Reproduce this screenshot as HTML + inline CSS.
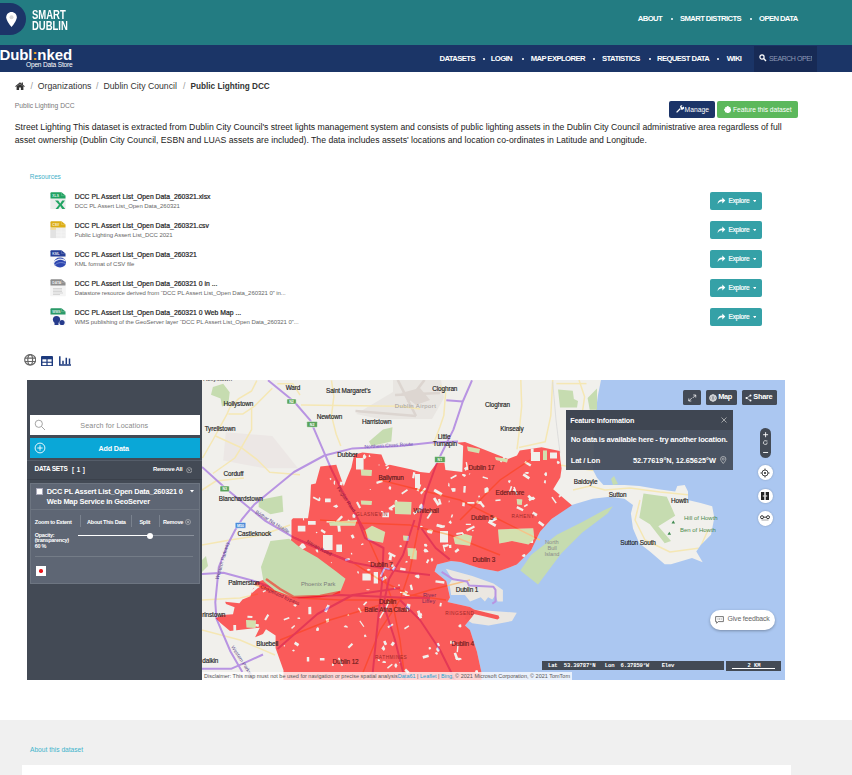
<!DOCTYPE html>
<html><head><meta charset="utf-8">
<style>
*{margin:0;padding:0;box-sizing:border-box}
html,body{width:852px;height:775px;overflow:hidden;background:#fff;font-family:"Liberation Sans",sans-serif;color:#333}
.a{position:absolute;white-space:nowrap;line-height:1}
#top{position:absolute;left:0;top:0;width:852px;height:45px;background:#237c82}
#nav{position:absolute;left:0;top:45px;width:852px;height:27px;background:#1b3567}
.tn{color:#fff;font-weight:bold;font-size:7.7px;letter-spacing:-0.6px}
.dot{position:absolute;width:2px;height:2px;background:#fff;border-radius:1px}
.bc{font-size:8.7px;color:#333}
.res-t{font-size:6.5px;font-weight:bold;color:#222}
.res-s{font-size:5.9px;color:#555}
.exp{position:absolute;left:710px;width:52px;height:18px;background:#35a1a7;border-radius:2px}
.exp span{position:absolute;left:18.5px;top:5.9px;font-size:6.5px;color:#fff;line-height:1;letter-spacing:-0.15px;-webkit-text-stroke:0.2px #fff}
#about{position:absolute;left:0;top:720px;width:852px;height:55px;background:#f0f0f0}
</style></head><body>
<div id="top"></div>
<div id="nav"></div>
<!-- Smart Dublin logo -->
<div class="a" style="left:0;top:3px;width:26px;height:31.5px;background:#1c3468;border-radius:0 16px 16px 0"></div>
<svg class="a" style="left:5px;top:11px" width="13" height="17" viewBox="0 0 13 17"><path d="M6.5 1C3.5 1 1.2 3.3 1.2 6.2c0 3.6 5.3 9.8 5.3 9.8s5.3-6.2 5.3-9.8C11.8 3.3 9.5 1 6.5 1z" fill="#fff"/><circle cx="6.5" cy="6.3" r="2" fill="#d9d9d9"/></svg>
<div class="a" style="left:31.5px;top:8.5px;color:#fff;font-size:13px;font-weight:bold;line-height:11px;transform:scaleX(0.73);transform-origin:0 0">SMART<br>DUBLIN</div>
<!-- Dublinked logo -->
<div class="a" style="left:-0.5px;top:47.2px;color:#fff;font-size:15px;font-weight:bold;letter-spacing:-0.1px">Dubl<span style="color:#f5a623">:</span>nked</div>
<div class="a" style="left:26px;top:62px;color:#fff;font-size:6.6px;letter-spacing:-0.2px">Open Data Store</div>

<div class="a tn" style="left:637.8px;top:15.2px">ABOUT</div>
<div class="dot" style="left:671px;top:18px"></div>
<div class="a tn" style="left:680px;top:15.2px">SMART DISTRICTS</div>
<div class="dot" style="left:750px;top:18px"></div>
<div class="a tn" style="left:759px;top:15.2px">OPEN DATA</div>

<div class="a tn" style="left:439.5px;top:54.8px">DATASETS</div>
<div class="dot" style="left:482.5px;top:57.5px"></div>
<div class="a tn" style="left:490.7px;top:54.8px">LOGIN</div>
<div class="dot" style="left:522px;top:57.5px"></div>
<div class="a tn" style="left:530.7px;top:54.8px">MAP EXPLORER</div>
<div class="dot" style="left:593px;top:57.5px"></div>
<div class="a tn" style="left:602px;top:54.8px">STATISTICS</div>
<div class="dot" style="left:648.5px;top:57.5px"></div>
<div class="a tn" style="left:657px;top:54.8px">REQUEST DATA</div>
<div class="dot" style="left:717px;top:57.5px"></div>
<div class="a tn" style="left:726.7px;top:54.8px">WIKI</div>
<div class="a" style="left:754px;top:45.5px;width:62.6px;height:26.5px;background:#172a55"></div>
<svg class="a" style="left:759px;top:54px" width="8" height="8" viewBox="0 0 8 8"><circle cx="3" cy="3" r="2.1" stroke="#fff" stroke-width="1.2" fill="none"/><path d="M4.6 4.6L7 7" stroke="#fff" stroke-width="1.4"/></svg>
<div class="a" style="left:769px;top:55.3px;width:43px;overflow:hidden;color:#8f9bb5;font-size:7px;letter-spacing:-0.45px">SEARCH OPEN DATA</div>

<!-- breadcrumb -->
<svg class="a" style="left:14.8px;top:82px" width="10" height="8" viewBox="0 0 10 8"><path d="M5 0.3L0.2 4.3l0.7 0.8L5 1.7l4.1 3.4 0.7-0.8L7.9 2.7V0.6H6.7v1.1z" fill="#333"/><path d="M1.6 4.6V8h2.5V5.6h1.8V8h2.5V4.6L5 1.9z" fill="#333"/></svg>
<div class="a bc" style="left:30.5px;top:81.7px;color:#999">/</div>
<div class="a bc" style="left:37.8px;top:81.7px">Organizations</div>
<div class="a bc" style="left:96px;top:81.7px;color:#999">/</div>
<div class="a bc" style="left:103.5px;top:81.7px">Dublin City Council</div>
<div class="a bc" style="left:183px;top:81.7px;color:#999">/</div>
<div class="a bc" style="left:190.6px;top:83px;font-weight:bold;font-size:8.2px">Public Lighting DCC</div>
<div class="a" style="left:14.8px;top:103px;font-size:6.7px;color:#777">Public Lighting DCC</div>

<div class="a" style="left:669.2px;top:101.2px;width:45.4px;height:17.2px;background:#1c3468;border-radius:2px"></div>
<svg class="a" style="left:676px;top:105px" width="8" height="8" viewBox="0 0 8 8"><path d="M0.6 7.4L4.2 3.8" stroke="#fff" stroke-width="1.3"/><path d="M4 1.6a2 2 0 0 1 2.6-1.2L5.4 1.6 6.4 2.6 7.6 1.4A2 2 0 0 1 5 4.4z" fill="#fff"/></svg>
<div class="a" style="left:684.6px;top:106.5px;color:#fff;font-size:6.75px">Manage</div>
<div class="a" style="left:717.2px;top:101.2px;width:80.5px;height:17.2px;background:#5cb85c;border-radius:2px"></div>
<svg class="a" style="left:723.5px;top:105.5px" width="7.5" height="7.5" viewBox="0 0 8 8"><g fill="#fff"><circle cx="4" cy="4" r="2.4"/><circle cx="4" cy="1.4" r="1.3"/><circle cx="4" cy="6.6" r="1.3"/><circle cx="1.4" cy="4" r="1.3"/><circle cx="6.6" cy="4" r="1.3"/><circle cx="2.2" cy="2.2" r="1.2"/><circle cx="5.8" cy="2.2" r="1.2"/><circle cx="2.2" cy="5.8" r="1.2"/><circle cx="5.8" cy="5.8" r="1.2"/></g></svg>
<div class="a" style="left:733px;top:106.5px;color:#fff;font-size:6.64px">Feature this dataset</div>

<div class="a" style="left:14.8px;top:123.3px;font-size:8.69px;color:#222">Street Lighting This dataset is extracted from Dublin City Council's street lights management system and consists of public lighting assets in the Dublin City Council administrative area regardless of full</div>
<div class="a" style="left:14.8px;top:136.3px;font-size:8.69px;color:#222">asset ownership (Dublin City Council, ESBN and LUAS assets are included). The data includes assets' locations and location co-ordinates in Latitude and Longitude.</div>

<div class="a" style="left:29.8px;top:174.2px;font-size:6.5px;color:#3fb0c9">Resources</div>
<!-- RESOURCES -->
<div class="a" style="left:49.8px;top:192.0px"><svg width="16" height="17.5" viewBox="0 0 16 17.5"><path d="M0.5 1.2Q0.5 0.3 1.4 0.3H11.5L15.5 3.6V17.2H0.5z" fill="#f3f3f3"/><rect x="0.5" y="7" width="15" height="10" fill="#ececec"/><path d="M5 8.5h3.2l2 3 2-3h2.8l-3.2 4.3 3.4 4.2h-3l-2-3-2 3H5.5l3.5-4.3z" fill="#22a463"/><path d="M0.5 1.2Q0.5 0.3 1.4 0.3H11.5L15.5 3.6V6.6H0.5z" fill="#21a262"/><path d="M11.5 0.3V3.6H15.5" fill="none" stroke="#fff" stroke-opacity="0.5" stroke-width="0.4"/><text x="2.3" y="4.8" font-family="Liberation Sans" font-weight="bold" font-size="3.4" fill="#fff" fill-opacity="0.85">XLS</text></svg></div>
<div class="a" style="left:74.7px;top:194.40px;font-size:6.8px;color:#222;letter-spacing:0.03px;-webkit-text-stroke:0.2px #222">DCC PL Assert List_Open Data_260321.xlsx</div>
<div class="a" style="left:74.7px;top:203.00px;font-size:6px;color:#666;letter-spacing:-0.05px">DCC PL Assert List_Open Data_260321</div>
<div class="exp" style="top:192.0px"><svg style="position:absolute;left:7px;top:5px" width="8.5" height="7.5" viewBox="0 0 9 8"><path d="M0.6 7.6C0.6 4.2 2.6 2.6 5.6 2.6V0.4L8.8 3.6 5.6 6.8V4.6C3.4 4.6 1.8 5.4 0.6 7.6z" fill="#fff"/></svg><span>Explore</span><svg style="position:absolute;left:42.6px;top:8.2px" width="3.6" height="2.2" viewBox="0 0 3.6 2.2"><path d="M0 0h3.6L1.8 2.2z" fill="#fff"/></svg></div>
<div class="a" style="left:49.8px;top:221.0px"><svg width="16" height="17.5" viewBox="0 0 16 17.5"><path d="M0.5 1.2Q0.5 0.3 1.4 0.3H11.5L15.5 3.6V17.2H0.5z" fill="#f3f3f3"/><rect x="0.5" y="7" width="15" height="10" fill="#eeeeee"/><rect x="0.5" y="7" width="5.5" height="10" fill="#e2e2e2"/><rect x="0.5" y="7" width="5.5" height="1.8" fill="#f3dca0"/><path d="M6 11h10M6 14h10M11 7v10" stroke="#f7f7f7" stroke-width="0.6"/><path d="M0.5 1.2Q0.5 0.3 1.4 0.3H11.5L15.5 3.6V6.6H0.5z" fill="#dcae16"/><path d="M11.5 0.3V3.6H15.5" fill="none" stroke="#fff" stroke-opacity="0.5" stroke-width="0.4"/><text x="2.3" y="4.8" font-family="Liberation Sans" font-weight="bold" font-size="3.4" fill="#fff" fill-opacity="0.85">CSV</text></svg></div>
<div class="a" style="left:74.7px;top:223.40px;font-size:6.8px;color:#222;letter-spacing:0.03px;-webkit-text-stroke:0.2px #222">DCC PL Assert List_Open Data_260321.csv</div>
<div class="a" style="left:74.7px;top:232.00px;font-size:6px;color:#666;letter-spacing:-0.05px">Public Lighting Assert List_DCC 2021</div>
<div class="exp" style="top:221.0px"><svg style="position:absolute;left:7px;top:5px" width="8.5" height="7.5" viewBox="0 0 9 8"><path d="M0.6 7.6C0.6 4.2 2.6 2.6 5.6 2.6V0.4L8.8 3.6 5.6 6.8V4.6C3.4 4.6 1.8 5.4 0.6 7.6z" fill="#fff"/></svg><span>Explore</span><svg style="position:absolute;left:42.6px;top:8.2px" width="3.6" height="2.2" viewBox="0 0 3.6 2.2"><path d="M0 0h3.6L1.8 2.2z" fill="#fff"/></svg></div>
<div class="a" style="left:49.8px;top:250.0px"><svg width="16" height="17.5" viewBox="0 0 16 17.5"><path d="M0.5 1.2Q0.5 0.3 1.4 0.3H11.5L15.5 3.6V17.2H0.5z" fill="#f3f3f3"/><rect x="0.5" y="7" width="15" height="10" fill="#fafafa"/><ellipse cx="10" cy="12.5" rx="6" ry="5" fill="#2e47b0"/><path d="M3 13.5c2.5-4 8-6 12.5-2.5" stroke="#e8ecf5" stroke-width="1.3" fill="none"/><path d="M4.5 15.5c2-2.5 6-4 11-2" stroke="#8fa0d8" stroke-width="0.7" fill="none"/><path d="M0.5 1.2Q0.5 0.3 1.4 0.3H11.5L15.5 3.6V6.6H0.5z" fill="#263f98"/><path d="M11.5 0.3V3.6H15.5" fill="none" stroke="#fff" stroke-opacity="0.5" stroke-width="0.4"/><text x="2.3" y="4.8" font-family="Liberation Sans" font-weight="bold" font-size="3.4" fill="#fff" fill-opacity="0.85">KML</text></svg></div>
<div class="a" style="left:74.7px;top:252.40px;font-size:6.8px;color:#222;letter-spacing:0.03px;-webkit-text-stroke:0.2px #222">DCC PL Assert List_Open Data_260321</div>
<div class="a" style="left:74.7px;top:261.00px;font-size:6px;color:#666;letter-spacing:-0.05px">KML format of CSV file</div>
<div class="exp" style="top:250.0px"><svg style="position:absolute;left:7px;top:5px" width="8.5" height="7.5" viewBox="0 0 9 8"><path d="M0.6 7.6C0.6 4.2 2.6 2.6 5.6 2.6V0.4L8.8 3.6 5.6 6.8V4.6C3.4 4.6 1.8 5.4 0.6 7.6z" fill="#fff"/></svg><span>Explore</span><svg style="position:absolute;left:42.6px;top:8.2px" width="3.6" height="2.2" viewBox="0 0 3.6 2.2"><path d="M0 0h3.6L1.8 2.2z" fill="#fff"/></svg></div>
<div class="a" style="left:49.8px;top:279.0px"><svg width="16" height="17.5" viewBox="0 0 16 17.5"><path d="M0.5 1.2Q0.5 0.3 1.4 0.3H11.5L15.5 3.6V17.2H0.5z" fill="#f3f3f3"/><rect x="0.5" y="7" width="15" height="10" fill="#f4f4f4"/><path d="M3 9.5h9M3 11h9M3 12.5h9M3 14h10M3 15.5h7" stroke="#c8c8c8" stroke-width="0.7"/><path d="M0.5 1.2Q0.5 0.3 1.4 0.3H11.5L15.5 3.6V6.6H0.5z" fill="#8e8e8e"/><path d="M11.5 0.3V3.6H15.5" fill="none" stroke="#fff" stroke-opacity="0.5" stroke-width="0.4"/><text x="2.3" y="4.8" font-family="Liberation Sans" font-weight="bold" font-size="3.4" fill="#fff" fill-opacity="0.85">DATA</text></svg></div>
<div class="a" style="left:74.7px;top:281.40px;font-size:6.8px;color:#222;letter-spacing:0.03px;-webkit-text-stroke:0.2px #222">DCC PL Assert List_Open Data_260321 0 in ...</div>
<div class="a" style="left:74.7px;top:290.00px;font-size:6px;color:#666;letter-spacing:-0.05px">Datastore resource derived from “DCC PL Assert List_Open Data_260321 0” in...</div>
<div class="exp" style="top:279.0px"><svg style="position:absolute;left:7px;top:5px" width="8.5" height="7.5" viewBox="0 0 9 8"><path d="M0.6 7.6C0.6 4.2 2.6 2.6 5.6 2.6V0.4L8.8 3.6 5.6 6.8V4.6C3.4 4.6 1.8 5.4 0.6 7.6z" fill="#fff"/></svg><span>Explore</span><svg style="position:absolute;left:42.6px;top:8.2px" width="3.6" height="2.2" viewBox="0 0 3.6 2.2"><path d="M0 0h3.6L1.8 2.2z" fill="#fff"/></svg></div>
<div class="a" style="left:49.8px;top:308.0px"><svg width="16" height="17.5" viewBox="0 0 16 17.5"><path d="M0.5 1.2Q0.5 0.3 1.4 0.3H11.5L15.5 3.6V17.2H0.5z" fill="#f3f3f3"/><rect x="0.5" y="7" width="15" height="10" fill="#fafafa"/><circle cx="6.5" cy="11.5" r="3.6" fill="#263b8c"/><rect x="4.5" y="14" width="4" height="3" fill="#263b8c"/><circle cx="12" cy="14.5" r="2.6" fill="#263b8c"/><path d="M0.5 1.2Q0.5 0.3 1.4 0.3H11.5L15.5 3.6V6.6H0.5z" fill="#2a9a68"/><path d="M11.5 0.3V3.6H15.5" fill="none" stroke="#fff" stroke-opacity="0.5" stroke-width="0.4"/><text x="2.3" y="4.8" font-family="Liberation Sans" font-weight="bold" font-size="3.4" fill="#fff" fill-opacity="0.85">WMS</text></svg></div>
<div class="a" style="left:74.7px;top:310.40px;font-size:6.8px;color:#222;letter-spacing:0.03px;-webkit-text-stroke:0.2px #222">DCC PL Assert List_Open Data_260321 0 Web Map ...</div>
<div class="a" style="left:74.7px;top:319.00px;font-size:6px;color:#666;letter-spacing:-0.05px">WMS publishing of the GeoServer layer “DCC PL Assert List_Open Data_260321 0”...</div>
<div class="exp" style="top:308.0px"><svg style="position:absolute;left:7px;top:5px" width="8.5" height="7.5" viewBox="0 0 9 8"><path d="M0.6 7.6C0.6 4.2 2.6 2.6 5.6 2.6V0.4L8.8 3.6 5.6 6.8V4.6C3.4 4.6 1.8 5.4 0.6 7.6z" fill="#fff"/></svg><span>Explore</span><svg style="position:absolute;left:42.6px;top:8.2px" width="3.6" height="2.2" viewBox="0 0 3.6 2.2"><path d="M0 0h3.6L1.8 2.2z" fill="#fff"/></svg></div>

<!-- view icons -->
<svg class="a" style="left:23.8px;top:354.2px" width="12.4" height="11.6" viewBox="0 0 12.4 11.6"><g fill="none" stroke="#666" stroke-width="1.2"><ellipse cx="6.2" cy="5.8" rx="5.5" ry="5.2"/><ellipse cx="6.2" cy="5.8" rx="2.4" ry="5.2"/><path d="M0.8 4.1h10.8M0.8 7.5h10.8"/></g></svg>
<svg class="a" style="left:41px;top:355.8px" width="12" height="10.4" viewBox="0 0 12 10.4"><rect x="0" y="0" width="12" height="10.4" rx="1" fill="#1d3a7d"/><rect x="1.4" y="3.3" width="4" height="2.4" fill="#fff"/><rect x="6.6" y="3.3" width="4" height="2.4" fill="#fff"/><rect x="1.4" y="6.8" width="4" height="2.3" fill="#fff"/><rect x="6.6" y="6.8" width="4" height="2.3" fill="#fff"/></svg>
<svg class="a" style="left:59px;top:356px" width="12.3" height="9.8" viewBox="0 0 12.3 9.8"><path d="M0.8 0.2V9H12.3" fill="none" stroke="#1d3a7d" stroke-width="1.5"/><path d="M4 4.8v3.4M7.3 1.8v6.4M10.5 2.6v5.6" stroke="#1d3a7d" stroke-width="1.5"/></svg>

<!-- MAP -->
<svg class="a" style="left:202px;top:380px" width="583" height="300" viewBox="202 380 583 300">
<rect x="202" y="380" width="583" height="300" fill="#f1f0ec"/>
<path d="M225.8 432.2L272.3 436L298 468.3L264.5 468.3L223.2 460.6z" fill="#ece7e5"/>
<path d="M393 380H441L444 398L432 419H380L356 414L393 392z" fill="#e9e6e2"/>
<g stroke="#dcd5d0" stroke-width="2.6" fill="none"><path d="M355.5 411L416 416"/><path d="M397.7 380L416 416"/><path d="M424.5 380L407.6 402"/><path d="M395 395L440 393"/></g>
<path d="M401 393L420 388L430 400L416 405z" fill="#ddd6d1"/>
<polyline points="520.8,380.0 521.7,406.0 518.9,434.3 517.0,449.4" fill="none" stroke="#f5e7b4" stroke-width="1.5" stroke-linejoin="round"/>
<polyline points="552.7,380.0 550.8,415.6 545.2,441.8 528.3,445.6 518.9,447.5" fill="none" stroke="#f5e7b4" stroke-width="1.5" stroke-linejoin="round"/>
<polyline points="579.0,380.0 584.6,396.8 582.7,410.0" fill="none" stroke="#f5e7b4" stroke-width="1.5" stroke-linejoin="round"/>
<polyline points="556.4,383.6 586.5,383.6" fill="none" stroke="#f5e7b4" stroke-width="1.5" stroke-linejoin="round"/>
<polyline points="440.0,385.5 445.6,393.0 443.8,415.6 440.0,426.8 433.0,445.0" fill="none" stroke="#f5e7b4" stroke-width="1.5" stroke-linejoin="round"/>
<polyline points="256.8,380.6 251.6,391.0 238.7,398.6 229.7,407.7 227.0,414.1 212.9,440.0 202.6,458.0" fill="none" stroke="#f5e7b4" stroke-width="1.5" stroke-linejoin="round"/>
<polyline points="272.3,388.3 254.2,406.4 242.6,414.1 228.4,414.1" fill="none" stroke="#f5e7b4" stroke-width="1.5" stroke-linejoin="round"/>
<polyline points="251.6,409.0 251.6,429.6 241.3,447.7 234.8,458.0 212.9,473.5" fill="none" stroke="#f5e7b4" stroke-width="1.5" stroke-linejoin="round"/>
<polyline points="215.5,436.0 241.3,447.7 256.8,459.3 269.7,472.2 300.0,474.8" fill="none" stroke="#f5e7b4" stroke-width="1.5" stroke-linejoin="round"/>
<polyline points="277.4,383.8 292.9,383.8 300.0,395.0" fill="none" stroke="#f5e7b4" stroke-width="1.5" stroke-linejoin="round"/>
<polyline points="331.5,380.3 333.8,396.8 331.5,415.6 336.2,434.3 340.8,446.0" fill="none" stroke="#f5e7b4" stroke-width="1.5" stroke-linejoin="round"/>
<polyline points="301.0,405.0 340.0,405.5 399.5,406.2 420.0,409.0" fill="none" stroke="#f5e7b4" stroke-width="1.5" stroke-linejoin="round"/>
<polyline points="202.0,490.0 216.0,481.0 244.0,478.0" fill="none" stroke="#f5e7b4" stroke-width="1.5" stroke-linejoin="round"/>
<polyline points="573.0,490.0 590.0,486.0 605.0,490.0 630.0,488.0 660.0,492.0 690.0,495.0" fill="none" stroke="#f5e7b4" stroke-width="1.5" stroke-linejoin="round"/>
<polyline points="640.0,500.0 635.0,520.0 645.0,540.0 670.0,552.0 700.0,548.0 708.0,530.0" fill="none" stroke="#f5e7b4" stroke-width="1.5" stroke-linejoin="round"/>
<polyline points="202.0,545.0 230.0,540.0 262.0,535.0 290.0,525.0" fill="none" stroke="#f5e7b4" stroke-width="1.5" stroke-linejoin="round"/>
<polyline points="202.0,630.0 240.0,640.0 275.0,655.0" fill="none" stroke="#f5e7b4" stroke-width="1.5" stroke-linejoin="round"/>
<polyline points="560.0,465.0 590.0,470.0 620.0,474.0" fill="none" stroke="#f5e7b4" stroke-width="1.5" stroke-linejoin="round"/>
<polyline points="202.0,600.0 240.0,598.0 258.0,594.0" fill="none" stroke="#f5e7b4" stroke-width="1.5" stroke-linejoin="round"/>
<polygon points="601.0,380.0 598.0,395.0 596.0,410.0 594.0,440.0 593.0,470.0 597.0,477.7 603.4,485.0 624.5,485.0 639.3,486.0 658.3,489.3 675.2,491.4 677.3,486.0 684.7,485.0 688.0,491.4 688.0,499.9 700.6,503.0 712.2,506.2 714.3,517.8 711.0,534.7 700.6,545.3 696.3,551.6 702.7,562.2 692.0,558.0 671.0,564.3 664.7,564.3 649.9,551.6 639.3,543.2 633.0,528.4 630.9,513.6 633.0,505.1 624.5,498.8 609.7,496.7 592.8,498.8 571.7,505.1 551.5,519.0 540.0,531.7 531.0,550.5 516.8,564.6 498.0,571.6 479.0,568.0 460.4,562.0 451.0,561.0 437.0,564.6 434.6,571.6 446.3,581.0 450.0,597.5 447.5,602.0 470.0,607.0 474.0,609.5 486.0,612.5 498.5,615.5 499.5,618.0 497.5,619.5 485.0,616.5 474.0,614.0 472.0,617.0 465.0,625.6 470.0,630.0 476.9,651.5 481.5,672.6 481.5,680.0 785.0,680.0 785.0,380.0" fill="#abc7f1"/>
<polygon points="445.8,568.7 472.3,576.0 493.4,583.5 502.9,589.9 502.9,601.5 497.6,601.5 495.5,595.1 492.3,599.4 488.1,597.3 484.9,601.5 480.7,597.3 470.1,601.5 464.9,595.1 451.1,595.1 449.5,583.5 452.2,579.3" fill="#ebe7e1"/>
<polygon points="467.5,609.2 516.8,612.7 512.0,621.0 488.6,625.6 472.2,623.3 465.0,618.6" fill="#ebe7e1"/>
<polygon points="212.9,387.0 223.2,383.8 229.7,392.2 228.4,403.8 222.0,406.4 220.6,398.6 211.0,394.8" fill="#c6dcb0"/>
<polygon points="258.7,500.0 282.2,495.4 283.3,511.8 270.4,514.2 258.7,507.0" fill="#c6dcb0"/>
<polygon points="369.0,441.4 383.0,429.6 392.5,427.3 391.3,441.4 371.4,446.0" fill="#c6dcb0"/>
<polygon points="558.0,389.6 572.8,390.7 573.9,399.0 578.0,401.0 577.0,407.6 560.0,407.6" fill="#c6dcb0"/>
<polygon points="587.6,398.0 597.0,388.6 597.0,409.7 589.7,409.7" fill="#c6dcb0"/>
<polygon points="612.9,506.2 607.6,513.6 582.3,532.6 561.0,553.7 538.0,584.6 520.3,570.5 531.0,555.0 556.9,534.7 582.3,522.0 603.4,510.4" fill="#c6dcb0"/>
<polygon points="643.5,493.5 666.8,496.7 675.2,515.7 658.3,526.3 671.0,541.0 664.7,543.2 649.9,524.2 639.3,517.8" fill="#c6dcb0"/>
<polygon points="611.0,479.0 614.0,476.0 618.0,484.0 613.0,485.0" fill="#c6dcb0"/>
<polygon points="202.0,560.0 206.0,556.0 208.0,566.0 202.0,572.0" fill="#c6dcb0"/>
<polygon points="498.0,529.4 533.2,528.2 534.4,538.8 528.5,544.6 512.0,541.0 499.2,543.5" fill="#d3e0ae"/>
<polygon points="543.0,450.5 547.0,450.5 547.0,460.0 543.0,460.0" fill="#d3e0ae"/>
<polygon points="360.8,469.4 372.0,469.9 371.5,476.0 361.3,475.5" fill="#d3e0ae"/>
<polygon points="360.8,500.4 372.0,500.9 371.5,505.0 361.3,504.5" fill="#d3e0ae"/>
<polygon points="394.6,501.4 411.5,501.9 411.0,514.5 395.1,514.0" fill="#d3e0ae"/>
<polygon points="365.4,530.0 372.0,525.8 385.2,532.0 383.0,542.7 368.0,540.0" fill="#d3e0ae"/>
<polygon points="328.8,522.0 357.0,520.0 355.0,525.8 330.0,525.8" fill="#d3e0ae"/>
<polygon points="409.6,550.0 417.0,550.5 416.5,559.6 410.1,559.1" fill="#d3e0ae"/>
<polygon points="467.0,446.6 480.0,449.0 479.0,453.2 468.0,451.0" fill="#d3e0ae"/>
<polygon points="495.0,457.0 508.0,459.0 507.0,462.6 496.0,460.0" fill="#d3e0ae"/>
<polygon points="516.7,499.0 522.3,499.5 521.8,505.0 517.2,504.5" fill="#d3e0ae"/>
<polygon points="453.4,537.0 465.0,534.0 472.2,536.0 470.0,545.8 455.0,544.0" fill="#d3e0ae"/>
<polygon points="403.0,535.5 409.0,536.0 408.5,541.0 403.5,540.5" fill="#d3e0ae"/>
<polygon points="407.5,548.0 416.0,548.5 415.5,556.6 408.0,556.1" fill="#d3e0ae"/>
<polygon points="246.0,620.0 256.0,620.5 255.5,628.0 246.5,627.5" fill="#d3e0ae"/>
<polyline points="331.5,469.5 340.8,488.3 364.3,530.0 380.0,565.0 392.0,600.0 400.0,640.0 405.0,680.0" fill="none" stroke="#f5c48a" stroke-width="1.5"/>
<polyline points="425.2,495.4 418.0,530.0 410.0,570.0 400.0,600.0 380.0,630.0 360.0,680.0" fill="none" stroke="#f5c48a" stroke-width="1.5"/>
<polyline points="294.0,537.6 322.0,550.5 352.6,562.3 380.0,580.0 410.0,595.0 446.0,600.0" fill="none" stroke="#f5c48a" stroke-width="1.5"/>
<polyline points="255.0,585.0 300.0,598.0 340.0,600.0 380.0,600.0 420.0,598.0" fill="none" stroke="#f5c48a" stroke-width="1.5"/>
<polyline points="280.0,640.0 330.0,620.0 380.0,605.0 430.0,590.0 470.0,580.0" fill="none" stroke="#f5c48a" stroke-width="1.5"/>
<polyline points="320.0,520.0 360.0,523.0 410.0,525.0 450.0,535.0 500.0,555.0" fill="none" stroke="#f5c48a" stroke-width="1.5"/>
<polyline points="380.0,480.0 420.0,490.0 460.0,500.0 500.0,520.0 540.0,540.0" fill="none" stroke="#f5c48a" stroke-width="1.5"/>
<polyline points="460.0,520.0 480.0,500.0 500.0,480.0 530.0,460.0" fill="none" stroke="#f5c48a" stroke-width="1.5"/>
<polyline points="552.7,381.8 556,420 560,453" fill="none" stroke="#d8d8d8" stroke-width="0.8"/>
<polyline points="294.0,537.6 350.0,562.0 400.0,571.6 430.0,575.0" fill="none" stroke="#b894e2" stroke-width="2" stroke-linejoin="round"/>
<polyline points="254.0,581.0 298.6,597.5 340.8,595.0 400.0,597.5 430.0,598.0" fill="none" stroke="#b894e2" stroke-width="2" stroke-linejoin="round"/>
<polyline points="277.5,649.0 317.4,614.0 352.6,595.0 400.0,588.0" fill="none" stroke="#b894e2" stroke-width="2" stroke-linejoin="round"/>
<polyline points="358.0,520.0 365.0,538.0 383.5,548.0 382.0,583.0 378.0,620.0 372.0,680.0" fill="none" stroke="#b894e2" stroke-width="2" stroke-linejoin="round"/>
<polyline points="414.5,520.0 403.0,555.0 389.0,579.0 383.5,604.5 395.0,640.0 405.0,680.0" fill="none" stroke="#b894e2" stroke-width="2" stroke-linejoin="round"/>
<polyline points="421.5,528.5 435.6,548.0 449.7,559.4" fill="none" stroke="#b894e2" stroke-width="2" stroke-linejoin="round"/>
<polyline points="400.0,600.0 420.0,620.0 440.0,650.0 455.0,680.0" fill="none" stroke="#b894e2" stroke-width="2" stroke-linejoin="round"/>
<polyline points="268.0,380.3 294.0,401.5 310.3,420.3 324.4,453.1 331.5,469.5 340.8,488.3 364.3,530.0" fill="none" stroke="#b894e2" stroke-width="2" stroke-linejoin="round"/>
<polyline points="324.4,455.5 294.0,472.0 254.0,504.8 242.3,518.8 235.2,530.0 228.2,543.5 218.8,567.0 215.3,602.2 216.4,618.6 230.5,651.5 242.3,672.0" fill="none" stroke="#b894e2" stroke-width="2" stroke-linejoin="round"/>
<polyline points="324.4,455.5 352.6,448.4 400.0,446.0 432.3,442.6 458.0,441.4" fill="none" stroke="#b894e2" stroke-width="2" stroke-linejoin="round"/>
<polyline points="472.0,380.3 462.8,401.5 453.4,429.6 437.0,462.5 425.2,495.4 418.0,530.0" fill="none" stroke="#b894e2" stroke-width="2" stroke-linejoin="round"/>
<polyline points="446.3,400.3 462.8,401.5" fill="none" stroke="#b894e2" stroke-width="2" stroke-linejoin="round"/>
<polyline points="202.0,467.0 225.5,488.3 247.0,506.0 265.7,521.2 294.0,537.6 322.0,550.5 352.6,562.3" fill="none" stroke="#b894e2" stroke-width="2" stroke-linejoin="round"/>
<polyline points="202.0,574.0 223.5,572.8 254.0,581.0" fill="none" stroke="#b894e2" stroke-width="2" stroke-linejoin="round"/>
<polyline points="202.0,668.7 231.5,668.7 245.7,662.4 263.0,654.5" fill="none" stroke="#b894e2" stroke-width="2" stroke-linejoin="round"/>
<polyline points="441.6,571.9 453.2,579.3 467.0,581.4 469.1,585.6 493.4,586.7 495.5,589.9 495.5,601.5 492.3,603.6" fill="none" stroke="#b894e2" stroke-width="2" stroke-linejoin="round"/>
<defs><mask id="hm" maskUnits="userSpaceOnUse" x="202" y="380" width="583" height="300"><rect x="202" y="380" width="583" height="300" fill="#fff"/><path d="M331.3 479.6 L330.6 480.3 L329.9 479.6 L329.6 478.3 L330.8 477.9 L331.4 478.4Z M415.4 472.4 L414.2 478.5 L412.1 478.1 L413.2 472.0Z M421.3 484.7 L418.6 491.4 L416.6 490.6 L419.2 483.9Z M393.7 564.6 L393.6 566.1 L392.2 567.0 L390.7 566.5 L390.7 565.3 L392.0 564.4Z M557.7 460.8 L559.9 462.0 L559.4 463.4 L557.7 464.2 L556.6 462.1Z M316.2 533.3 L315.7 532.2 L316.9 531.7 L317.5 532.2 L317.1 533.1Z M369.8 569.2 L370.8 570.1 L369.0 570.8 L367.7 570.7 L366.6 569.6 L368.8 568.8Z M400.0 584.7 L399.8 585.7 L398.7 586.1 L398.1 585.5 L398.5 584.2Z M340.1 523.5 L340.9 531.5 L338.0 531.8 L337.1 523.8Z M390.3 463.9 L386.0 466.5 L385.1 465.1 L389.5 462.5Z M465.0 502.4 L464.6 506.4 L462.1 506.1 L462.5 502.2Z M497.3 519.4 L490.3 522.9 L488.9 520.3 L496.0 516.7Z M480.1 496.5 L479.2 497.6 L478.2 497.3 L478.4 496.0 L478.8 495.6 L479.5 495.6Z M437.1 651.5 L436.1 649.0 L437.3 647.1 L438.8 647.9 L440.0 650.3 L438.9 651.8Z M427.9 550.5 L428.6 552.1 L424.7 552.4 L423.5 550.4 L424.7 548.5 L426.4 549.0Z M318.8 500.7 L318.6 498.2 L319.5 497.0 L320.5 498.6 L320.2 500.4 L319.6 501.3Z M332.0 562.7 L331.7 563.3 L331.0 563.1 L330.8 562.3 L331.2 562.2 L332.0 562.3Z M397.0 500.3 L397.4 501.6 L396.4 502.4 L395.7 502.0 L395.1 500.3 L396.2 499.9Z M384.7 611.3 L380.5 618.5 L379.2 617.7 L383.4 610.5Z M293.6 605.9 L293.5 604.5 L295.5 604.2 L296.9 605.3 L295.7 606.7Z M295.4 641.5 L299.3 644.0 L297.8 646.4 L293.9 643.9Z M405.9 562.7 L405.1 561.9 L406.6 560.7 L408.2 561.9Z M408.0 490.4 L402.2 494.5 L401.2 493.1 L407.0 489.0Z M301.9 543.3 L303.9 543.7 L306.2 547.3 L302.3 549.4 L299.0 546.4Z M438.8 642.7 L440.0 645.8 L437.8 646.7 L436.6 643.6Z M397.5 665.4 L396.0 668.2 L394.3 666.1 L394.9 663.7 L396.3 663.6Z M449.4 500.5 L449.7 501.5 L449.1 502.6 L448.6 502.2 L448.8 500.5Z M392.1 508.3 L393.0 510.2 L390.5 510.5 L390.6 509.0Z M460.3 627.5 L458.6 627.0 L458.5 625.2 L460.0 624.3 L461.2 624.4 L461.4 627.1Z M402.6 593.0 L409.9 594.7 L409.5 596.3 L402.3 594.6Z M311.2 606.8 L311.4 614.2 L308.4 614.3 L308.3 606.9Z M351.0 553.0 L351.9 552.7 L352.2 553.3 L352.2 554.7 L351.5 554.6 L350.8 554.0Z M316.7 552.3 L315.3 549.7 L317.8 549.2 L318.3 552.4Z M480.6 501.1 L484.9 506.2 L483.1 507.7 L478.8 502.6Z M395.0 643.0 L392.9 646.3 L390.5 644.8 L392.6 641.4Z M359.0 607.4 L361.7 612.0 L360.5 612.7 L357.8 608.2Z M326.6 520.9 L335.2 521.2 L335.2 522.7 L326.5 522.4Z M476.9 500.5 L482.1 501.8 L481.4 504.5 L476.2 503.2Z M517.4 506.1 L523.6 509.2 L522.6 511.3 L516.3 508.2Z M329.0 618.4 L329.0 621.4 L326.6 622.7 L325.7 619.1Z M545.6 476.2 L544.0 474.2 L545.3 472.3 L546.9 472.6 L547.0 475.5Z M294.3 651.3 L293.1 651.6 L292.0 650.3 L293.7 649.6 L294.8 650.2Z M348.0 519.5 L352.3 521.3 L351.1 524.0 L346.8 522.2Z M394.6 589.3 L393.6 587.5 L394.6 587.1 L395.8 588.3Z M387.0 578.1 L382.4 580.9 L380.9 578.5 L385.5 575.7Z M462.0 659.2 L458.7 660.4 L454.8 658.4 L457.2 657.4 L460.8 658.1Z M319.9 657.9 L324.5 657.9 L324.5 660.5 L319.9 660.5Z M406.0 668.5 L409.6 671.9 L407.7 673.8 L404.2 670.5Z M400.4 567.5 L405.8 568.5 L405.4 570.8 L400.0 569.9Z M284.4 646.8 L283.5 646.1 L283.8 645.5 L284.7 644.9 L285.2 645.8Z M289.6 618.6 L284.1 620.6 L283.5 619.1 L289.0 617.1Z M252.9 587.6 L252.4 585.4 L254.1 585.3 L255.2 586.3 L253.9 588.7Z M478.0 673.0 L474.9 672.2 L475.8 670.1 L478.0 670.4Z M339.3 657.6 L343.1 665.5 L341.7 666.2 L337.9 658.3Z M370.1 455.9 L370.5 456.9 L369.2 457.1 L368.8 456.9 L368.7 455.4 L369.6 454.6Z M336.2 508.1 L332.8 506.3 L336.6 504.5 L338.3 506.5Z M386.1 661.7 L385.8 663.1 L383.7 663.1 L381.7 662.3 L383.9 660.8Z M429.4 559.9 L427.6 563.4 L425.9 562.5 L427.7 559.0Z M384.4 567.3 L389.8 568.6 L389.5 569.9 L384.1 568.7Z M434.9 488.7 L442.6 493.3 L441.0 495.9 L433.4 491.2Z M533.3 496.4 L535.4 498.4 L533.2 500.2 L530.4 498.2Z M400.0 591.8 L405.8 591.9 L405.8 593.1 L400.0 593.1Z M529.1 494.7 L533.0 498.2 L531.2 500.2 L527.3 496.7Z M512.3 486.4 L510.3 492.2 L508.9 491.7 L510.8 486.0Z M470.9 525.0 L465.8 525.0 L465.8 523.7 L470.9 523.7Z M504.0 536.8 L510.7 537.5 L510.6 538.8 L503.9 538.2Z M389.1 551.9 L395.9 555.5 L394.8 557.6 L387.9 554.0Z M408.1 592.0 L405.8 596.0 L403.2 594.5 L405.5 590.5Z M362.8 457.7 L363.1 455.3 L364.5 454.0 L366.5 456.8 L364.8 459.2Z M382.9 482.1 L376.8 483.9 L376.2 481.7 L382.2 479.9Z M349.9 560.0 L345.4 561.1 L344.9 559.0 L349.4 557.9Z M508.4 482.3 L507.9 480.8 L509.2 480.2 L510.7 480.2 L510.3 482.1 L509.4 483.2Z M411.8 584.4 L413.1 589.8 L410.9 590.3 L409.6 584.9Z M451.3 544.8 L451.4 548.0 L449.1 548.0 L449.0 544.9Z M299.4 617.3 L300.4 618.9 L298.4 619.1 L296.9 618.1Z M330.0 605.8 L326.5 612.5 L324.0 611.2 L327.5 604.5Z M319.1 628.6 L318.7 630.7 L317.4 630.9 L315.9 630.4 L316.4 628.2 L317.9 626.9Z M458.7 644.5 L458.0 652.2 L456.6 652.0 L457.3 644.4Z M439.9 525.6 L441.9 525.0 L445.2 525.5 L444.5 527.4 L441.8 528.0 L439.6 527.8Z M453.2 514.7 L452.1 517.7 L450.7 517.2 L451.8 514.2Z M369.8 561.9 L368.3 561.8 L368.1 561.0 L369.9 560.9 L370.6 561.5Z M357.9 501.4 L361.0 507.5 L359.1 508.5 L356.0 502.4Z M445.4 547.3 L443.0 546.3 L444.2 544.7 L448.4 544.1 L448.6 545.9Z M430.6 559.1 L432.1 557.5 L433.4 560.0 L431.8 561.9Z M448.5 482.5 L449.5 483.7 L449.6 486.7 L448.0 486.1Z M514.8 486.8 L517.7 494.8 L516.2 495.3 L513.3 487.3Z M430.8 529.5 L433.2 530.3 L431.7 533.8 L427.8 533.0 L426.6 530.9 L428.3 529.6Z M250.7 584.5 L259.5 585.4 L259.2 587.8 L250.4 587.0Z M266.2 590.9 L263.2 592.4 L262.6 591.3 L265.7 589.8Z M488.7 491.7 L487.6 492.5 L484.7 493.2 L484.3 488.4 L487.2 486.9 L488.6 488.6Z M247.5 615.8 L252.5 616.1 L252.3 618.1 L247.4 617.7Z M474.9 527.5 L467.1 531.5 L466.1 529.6 L474.0 525.6Z M362.3 543.2 L363.6 543.7 L363.6 544.4 L361.5 545.3 L360.9 544.4Z M393.5 625.1 L388.3 628.2 L387.4 626.6 L392.6 623.6Z M309.2 657.1 L309.3 661.4 L306.8 661.4 L306.8 657.1Z M258.0 588.1 L252.0 592.9 L250.5 590.9 L256.5 586.1Z M437.0 523.7 L442.1 525.1 L441.4 527.8 L436.2 526.4Z M533.6 448.4 L533.6 453.0 L530.8 453.0 L530.8 448.4Z M353.2 644.4 L349.1 648.4 L347.6 646.9 L351.7 642.9Z M343.1 517.1 L337.5 522.9 L335.8 521.3 L341.3 515.4Z M533.7 499.0 L529.5 501.2 L528.3 499.1 L532.5 496.8Z M303.0 520.2 L302.9 518.2 L303.8 517.1 L304.2 520.4Z M370.6 490.1 L369.5 489.8 L369.7 489.2 L370.4 489.0 L371.2 489.5Z M422.4 615.4 L418.3 617.0 L417.4 614.7 L421.5 613.1Z M443.8 544.6 L445.5 551.1 L444.2 551.5 L442.5 544.9Z M440.1 498.7 L441.7 504.2 L439.5 504.8 L437.9 499.3Z M456.1 652.5 L458.5 659.0 L456.0 659.9 L453.7 653.3Z M392.8 664.8 L387.9 668.8 L387.0 667.6 L391.8 663.7Z M405.3 608.0 L407.4 603.4 L410.6 604.5 L409.6 609.7 L407.4 611.4Z M367.3 602.4 L364.1 605.7 L363.0 604.6 L366.1 601.3Z M295.2 626.1 L292.0 628.9 L291.1 627.8 L294.3 625.0Z M385.2 569.0 L381.5 577.0 L379.8 576.2 L383.5 568.2Z M381.4 512.5 L380.9 511.6 L381.6 510.8 L383.4 511.5 L383.2 512.5Z M370.3 589.4 L368.4 590.3 L365.9 589.9 L367.0 589.2Z M489.2 520.4 L496.4 524.6 L495.1 526.9 L487.8 522.7Z M514.4 487.2 L516.1 489.3 L514.5 492.0 L512.8 490.0Z M391.5 560.5 L388.5 559.8 L389.7 554.6 L392.0 556.0Z M482.9 476.3 L488.1 477.9 L487.7 479.3 L482.5 477.7Z M450.4 524.0 L448.4 522.3 L450.6 520.3 L451.9 523.1Z M468.8 474.4 L469.1 473.6 L470.5 473.6 L469.9 474.5Z M395.9 567.5 L393.7 570.7 L391.7 569.3 L393.9 566.1Z M525.5 461.1 L531.4 464.6 L530.1 466.6 L524.3 463.1Z M450.2 640.8 L453.8 640.9 L453.7 643.8 L450.1 643.7Z M524.0 473.3 L530.1 477.3 L528.6 479.6 L522.5 475.6Z M414.5 576.0 L416.4 574.7 L419.0 574.5 L419.6 577.3 L418.7 578.5 L416.0 577.6Z M385.3 648.9 L383.9 651.0 L381.3 648.6 L383.6 645.3Z M269.2 615.2 L266.0 620.6 L264.2 619.6 L267.4 614.1Z M355.6 516.7 L354.5 518.1 L352.6 517.4 L352.4 515.1 L353.4 513.7 L355.6 515.0Z M421.8 510.1 L414.2 514.7 L412.9 512.6 L420.5 508.0Z M432.7 512.1 L428.1 519.1 L426.5 518.0 L431.1 511.1Z M431.2 648.5 L430.1 649.4 L428.9 649.6 L428.6 648.1 L429.0 647.1 L430.7 647.3Z M539.4 520.8 L544.5 524.5 L543.0 526.7 L537.9 522.9Z M459.5 550.3 L455.9 553.0 L454.4 551.0 L457.9 548.2Z M378.3 465.2 L378.7 464.4 L379.6 464.5 L379.5 465.5Z M423.2 526.5 L420.7 527.2 L419.8 526.1 L421.7 525.7Z M521.6 556.0 L523.0 554.6 L524.7 553.9 L525.7 555.3 L524.5 557.6Z M377.7 659.4 L378.8 659.2 L379.9 660.1 L379.8 660.9 L378.3 660.9 L377.6 660.0Z M389.2 467.4 L387.1 469.6 L386.0 468.5 L388.1 466.3Z M424.5 546.4 L423.9 543.9 L426.2 543.7 L427.5 545.3 L426.8 546.7Z M348.8 614.1 L349.3 615.3 L348.4 615.8 L347.2 615.6 L347.7 614.5Z M528.0 505.3 L524.5 507.2 L523.7 505.7 L527.2 503.8Z M335.2 481.1 L335.0 484.3 L334.2 484.9 L333.6 483.3 L334.0 480.5Z M535.6 457.7 L535.4 460.1 L534.3 458.2 L534.8 455.7Z M395.3 506.3 L389.8 510.1 L388.4 508.0 L394.0 504.3Z M426.2 488.7 L421.5 494.4 L420.0 493.1 L424.7 487.5Z M236.1 625.0 L236.2 633.0 L233.5 633.1 L233.3 625.0Z M385.5 640.5 L387.2 644.3 L384.8 645.4 L383.1 641.6Z M400.1 544.9 L401.7 545.4 L401.9 546.9 L399.8 547.2 L399.4 546.1Z M562.3 495.5 L559.3 497.5 L558.4 496.1 L561.4 494.1Z M465.9 486.1 L465.4 492.7 L463.2 492.5 L463.6 485.9Z M467.4 469.0 L465.7 471.0 L463.9 468.2 L466.5 466.4Z M419.5 610.2 L422.2 617.7 L419.5 618.7 L416.8 611.2Z M365.2 634.2 L366.8 636.4 L364.4 637.2 L364.0 635.2Z M399.3 661.9 L400.1 661.7 L400.3 662.6 L399.7 663.4 L399.2 662.6Z M436.8 652.1 L437.8 652.9 L437.9 654.3 L436.5 654.7 L434.7 653.1 L436.1 652.2Z M429.0 657.1 L423.2 658.7 L422.4 656.0 L428.3 654.4Z M420.9 510.3 L418.7 508.0 L419.8 504.8 L421.8 503.4 L423.2 505.6 L423.4 509.1Z M544.7 483.3 L543.8 482.5 L544.4 480.2 L545.6 480.1 L546.0 482.1 L545.4 483.7Z M456.9 476.0 L451.1 479.2 L450.2 477.7 L456.1 474.5Z M441.9 603.1 L441.3 606.6 L439.4 606.3 L440.0 602.8Z M519.0 507.8 L519.5 508.7 L518.4 508.9 L517.0 508.6 L517.8 507.9Z M409.3 626.6 L404.9 629.4 L404.0 628.0 L408.5 625.2Z M333.3 666.0 L331.9 665.8 L332.0 663.4 L333.4 662.9 L334.0 665.0Z M463.0 533.8 L456.5 534.9 L456.2 533.1 L462.7 532.0Z M357.1 572.2 L357.6 570.9 L358.7 571.5 L359.0 573.6 L357.9 573.4Z M533.2 538.2 L533.1 542.9 L531.0 542.9 L531.0 538.2Z M435.7 580.2 L444.5 581.3 L444.2 583.7 L435.3 582.5Z M360.3 620.5 L364.4 626.4 L363.4 627.1 L359.3 621.2Z M452.5 491.9 L451.8 490.5 L450.8 488.6 L453.2 487.9 L455.6 488.3 L455.4 491.4Z M506.0 456.7 L501.3 462.6 L499.9 461.5 L504.6 455.6Z M343.1 482.1 L342.2 485.6 L339.5 484.8 L340.4 481.4Z M341.3 545.9 L340.5 549.1 L337.8 548.4 L338.6 545.1Z M435.2 497.3 L439.9 504.4 L437.6 505.9 L432.9 498.8Z M552.6 496.7 L556.8 502.7 L555.5 503.6 L551.3 497.6Z M500.6 500.8 L495.5 501.2 L495.4 499.7 L500.5 499.3Z M353.0 534.3 L354.7 537.6 L352.3 538.8 L350.6 535.5Z M313.6 496.4 L319.7 499.7 L318.9 501.3 L312.7 498.0Z M467.0 462.0 L468.4 469.8 L467.0 470.1 L465.6 462.2Z M473.8 530.3 L473.4 531.2 L471.9 531.2 L471.9 530.4 L473.0 529.8Z M526.5 471.9 L528.8 471.9 L528.3 474.1 L525.6 473.8 L524.6 472.4Z M485.5 489.8 L484.5 488.6 L486.2 487.8 L486.6 489.1Z M345.1 625.2 L347.4 625.9 L347.8 627.7 L343.6 627.1Z M321.8 529.1 L325.9 531.7 L324.6 533.7 L320.5 531.1Z M467.3 501.9 L474.4 501.9 L474.4 503.7 L467.3 503.7Z M250.9 622.3 L259.1 624.6 L258.4 627.0 L250.3 624.8Z M462.1 534.1 L462.8 532.5 L464.1 533.9 L463.8 535.7 L462.6 536.2Z M390.5 489.9 L388.7 489.1 L388.7 487.2 L390.0 485.8 L391.3 487.8Z M389.5 602.3 L386.5 608.7 L385.2 608.1 L388.2 601.6Z M464.5 477.1 L462.4 475.8 L462.0 474.1 L464.0 474.1 L465.8 474.8 L465.9 475.8Z M533.4 511.5 L537.6 513.9 L536.2 516.4 L532.0 514.1Z M498.0 529.4 L533.2 528.2 L534.4 538.8 L528.5 544.6 L512.0 541.0 L499.2 543.5Z M543.0 450.5 L547.0 450.5 L547.0 460.0 L543.0 460.0Z M360.8 469.4 L372.0 469.9 L371.5 476.0 L361.3 475.5Z M360.8 500.4 L372.0 500.9 L371.5 505.0 L361.3 504.5Z M394.6 501.4 L411.5 501.9 L411.0 514.5 L395.1 514.0Z M365.4 530.0 L372.0 525.8 L385.2 532.0 L383.0 542.7 L368.0 540.0Z M328.8 522.0 L357.0 520.0 L355.0 525.8 L330.0 525.8Z M409.6 550.0 L417.0 550.5 L416.5 559.6 L410.1 559.1Z M467.0 446.6 L480.0 449.0 L479.0 453.2 L468.0 451.0Z M495.0 457.0 L508.0 459.0 L507.0 462.6 L496.0 460.0Z M516.7 499.0 L522.3 499.5 L521.8 505.0 L517.2 504.5Z M453.4 537.0 L465.0 534.0 L472.2 536.0 L470.0 545.8 L455.0 544.0Z M403.0 535.5 L409.0 536.0 L408.5 541.0 L403.5 540.5Z M407.5 548.0 L416.0 548.5 L415.5 556.6 L408.0 556.1Z M246.0 620.0 L256.0 620.5 L255.5 628.0 L246.5 627.5Z M531.0 452.0 L540.0 452.0 L540.0 461.0 L531.0 461.0Z M550.0 452.5 L557.0 452.5 L557.0 458.5 L550.0 458.5Z M356.0 458.0 L363.6 458.0 L363.6 469.4 L356.0 469.4Z M415.0 474.0 L420.0 474.0 L420.0 488.0 L415.0 488.0Z M325.0 498.5 L330.7 498.5 L330.7 502.3 L325.0 502.3Z M382.3 512.6 L389.0 512.6 L389.0 517.3 L382.3 517.3Z M308.0 521.0 L315.7 521.0 L315.7 524.8 L308.0 524.8Z M297.8 525.8 L305.4 525.8 L305.4 531.4 L297.8 531.4Z M323.0 535.0 L332.6 535.0 L332.6 550.0 L323.0 550.0Z M336.3 544.6 L342.0 544.6 L342.0 552.0 L336.3 552.0Z M362.4 573.5 L370.8 573.5 L370.8 580.6 L362.4 580.6Z M373.7 572.0 L378.0 572.0 L378.0 583.4 L373.7 583.4Z M440.0 531.0 L448.0 531.0 L448.0 542.5 L440.0 542.5Z" fill="#000"/></mask></defs>
<path d="M215.7 618.3 L222.0 615.0 L233.0 614.3 L234.6 607.2 L226.0 604.0 L225.2 601.7 L239.4 603.3 L242.5 599.4 L250.4 596.2 L252.0 591.5 L255.1 582.8 L266.1 578.9 L278.0 560.0 L291.5 538.8 L291.5 520.0 L293.0 518.3 L308.0 518.3 L310.0 505.0 L311.0 484.5 L315.7 483.5 L320.4 466.6 L336.3 464.7 L338.2 470.4 L343.8 486.3 L346.7 478.8 L351.4 467.6 L354.2 454.4 L362.6 452.5 L381.4 454.4 L385.2 463.8 L411.5 469.4 L420.0 472.0 L429.4 472.9 L437.0 462.6 L444.4 462.6 L445.4 470.0 L462.3 472.0 L463.2 445.7 L456.6 442.8 L465.0 441.9 L508.0 458.9 L517.0 455.6 L519.7 450.5 L541.6 447.3 L559.7 451.1 L560.3 459.5 L561.6 468.5 L560.3 477.6 L553.2 489.2 L571.9 505.3 L551.5 519.0 L540.0 531.7 L531.0 550.5 L516.8 564.6 L498.0 571.6 L479.0 568.0 L460.4 562.0 L451.0 561.0 L437.0 564.6 L434.6 571.6 L446.3 581.0 L450.0 597.5 L447.5 602.0 L470.0 607.0 L474.0 609.5 L486.0 612.5 L498.5 615.5 L499.5 618.0 L497.5 619.5 L485.0 616.5 L474.0 614.0 L472.0 617.0 L465.0 625.6 L470.0 630.0 L476.9 651.5 L481.5 672.6 L481.5 680.0 L283.5 680.0 L283.5 670.2 L275.6 648.2 L275.6 635.6 L266.0 629.3 L263.0 634.0 L255.1 637.2 L259.8 627.7 L230.0 630.9 L220.5 623.0Z" fill="#ff0000" fill-opacity="0.62" mask="url(#hm)"/>
<polygon points="261.0,567.0 270.4,541.1 289.2,538.8 301.0,548.2 317.4,557.6 336.2,571.6 345.5,578.7 340.8,590.4 331.5,595.1 293.9,597.5 275.1,590.4 263.4,581.0" fill="#c6dcb0"/>
<polyline points="266,579 280,589 294,597 320,596 340,592" fill="none" stroke="#ff0000" stroke-opacity="0.5" stroke-width="2.5"/>
<rect x="286.9" y="399.0" width="9.3" height="5.0" rx="0.8" fill="#5aa35a" stroke="#fff" stroke-width="0.5"/>
<text x="291.5" y="402.6" font-family="Liberation Sans" font-weight="bold" font-size="3.6" fill="#fff" text-anchor="middle">N2</text>
<rect x="306.8" y="421.4" width="10.6" height="5.9" rx="0.8" fill="#5aa35a" stroke="#fff" stroke-width="0.5"/>
<text x="312.1" y="425.9" font-family="Liberation Sans" font-weight="bold" font-size="3.6" fill="#fff" text-anchor="middle">N2</text>
<rect x="220.0" y="486.0" width="9.3" height="5.8" rx="0.8" fill="#5aa35a" stroke="#fff" stroke-width="0.5"/>
<text x="224.7" y="490.4" font-family="Liberation Sans" font-weight="bold" font-size="3.6" fill="#fff" text-anchor="middle">N3</text>
<rect x="235.2" y="522.4" width="10.6" height="5.8" rx="0.8" fill="#4a8ad8" stroke="#fff" stroke-width="0.5"/>
<text x="240.5" y="526.8" font-family="Liberation Sans" font-weight="bold" font-size="3.6" fill="#fff" text-anchor="middle">M50</text>
<rect x="434.6" y="456.6" width="10.6" height="5.9" rx="0.8" fill="#5aa35a" stroke="#fff" stroke-width="0.5"/>
<text x="439.9" y="461.1" font-family="Liberation Sans" font-weight="bold" font-size="3.6" fill="#fff" text-anchor="middle">N1</text>
<text x="285.7" y="390.3" font-family="Liberation Sans" font-size="6.4" fill="#222" stroke="#222" stroke-width="0.15" letter-spacing="-0.12">Ward</text>
<text x="326.0" y="393.2" font-family="Liberation Sans" font-size="6.4" fill="#222" stroke="#222" stroke-width="0.15" letter-spacing="-0.12">Saint Margaret’s</text>
<text x="223.5" y="406.1" font-family="Liberation Sans" font-size="6.4" fill="#222" stroke="#222" stroke-width="0.15" letter-spacing="-0.12">Hollystown</text>
<text x="316.7" y="419.0" font-family="Liberation Sans" font-size="6.4" fill="#222" stroke="#222" stroke-width="0.15" letter-spacing="-0.12">Newtown</text>
<text x="362.0" y="423.6" font-family="Liberation Sans" font-size="6.4" fill="#222" stroke="#222" stroke-width="0.15" letter-spacing="-0.12">Harristown</text>
<text x="204.7" y="431.2" font-family="Liberation Sans" font-size="6.4" fill="#222" stroke="#222" stroke-width="0.15" letter-spacing="-0.12">Tyrellstown</text>
<text x="337.3" y="457.2" font-family="Liberation Sans" font-size="6.4" fill="#222" stroke="#222" stroke-width="0.15" letter-spacing="-0.12">Dubber</text>
<text x="223.5" y="476.0" font-family="Liberation Sans" font-size="6.4" fill="#222" stroke="#222" stroke-width="0.15" letter-spacing="-0.12">Corduff</text>
<text x="378.4" y="480.0" font-family="Liberation Sans" font-size="6.4" fill="#5a1a1a" stroke="#5a1a1a" stroke-width="0.15" letter-spacing="-0.12">Ballymun</text>
<text x="218.8" y="501.1" font-family="Liberation Sans" font-size="6.4" fill="#222" stroke="#222" stroke-width="0.15" letter-spacing="-0.12">Blanchardstown</text>
<text x="432.3" y="391.3" font-family="Liberation Sans" font-size="6.4" fill="#222" stroke="#222" stroke-width="0.15" letter-spacing="-0.12">Cloghran</text>
<text x="485.0" y="407.2" font-family="Liberation Sans" font-size="6.4" fill="#222" stroke="#222" stroke-width="0.15" letter-spacing="-0.12">Cloghran</text>
<text x="500.3" y="431.2" font-family="Liberation Sans" font-size="6.4" fill="#222" stroke="#222" stroke-width="0.15" letter-spacing="-0.12">Kinsealy</text>
<text x="437.7" y="438.9" font-family="Liberation Sans" font-size="6.4" fill="#222" stroke="#222" stroke-width="0.15" letter-spacing="-0.12">Little</text>
<text x="433.0" y="445.6" font-family="Liberation Sans" font-size="6.4" fill="#222" stroke="#222" stroke-width="0.15" letter-spacing="-0.12">Turnapin</text>
<text x="468.6" y="469.9" font-family="Liberation Sans" font-size="6.4" fill="#6a1c1c" stroke="#6a1c1c" stroke-width="0.15" letter-spacing="-0.12">Dublin 17</text>
<text x="413.5" y="512.9" font-family="Liberation Sans" font-size="6.4" fill="#6a1c1c" stroke="#6a1c1c" stroke-width="0.15" letter-spacing="-0.12">Whitehall</text>
<text x="495.6" y="494.8" font-family="Liberation Sans" font-size="6.4" fill="#6a1c1c" stroke="#6a1c1c" stroke-width="0.15" letter-spacing="-0.12">Edenmore</text>
<text x="471.0" y="519.9" font-family="Liberation Sans" font-size="6.4" fill="#6a1c1c" stroke="#6a1c1c" stroke-width="0.15" letter-spacing="-0.12">Dublin 5</text>
<text x="573.8" y="484.0" font-family="Liberation Sans" font-size="6.4" fill="#222" stroke="#222" stroke-width="0.15" letter-spacing="-0.12">Baldoyle</text>
<text x="608.7" y="497.1" font-family="Liberation Sans" font-size="6.4" fill="#222" stroke="#222" stroke-width="0.15" letter-spacing="-0.12">Sutton</text>
<text x="671.0" y="503.0" font-family="Liberation Sans" font-size="6.4" fill="#222" stroke="#222" stroke-width="0.15" letter-spacing="-0.12">Howth</text>
<text x="620.3" y="545.2" font-family="Liberation Sans" font-size="6.4" fill="#222" stroke="#222" stroke-width="0.15" letter-spacing="-0.12">Sutton South</text>
<text x="237.6" y="535.9" font-family="Liberation Sans" font-size="6.4" fill="#222" stroke="#222" stroke-width="0.15" letter-spacing="-0.12">Castleknock</text>
<text x="228.2" y="585.2" font-family="Liberation Sans" font-size="6.4" fill="#222" stroke="#222" stroke-width="0.15" letter-spacing="-0.12">Palmerston</text>
<text x="370.2" y="566.9" font-family="Liberation Sans" font-size="6.4" fill="#6a1c1c" stroke="#6a1c1c" stroke-width="0.15" letter-spacing="-0.12">Dublin 7</text>
<text x="378.9" y="603.9" font-family="Liberation Sans" font-size="6.4" fill="#6a1c1c" stroke="#6a1c1c" stroke-width="0.15" letter-spacing="-0.12">Dublin</text>
<text x="364.3" y="611.5" font-family="Liberation Sans" font-size="6.4" fill="#6a1c1c" stroke="#6a1c1c" stroke-width="0.15" letter-spacing="-0.12">Baile Atha Cliath</text>
<text x="202.3" y="617.3" font-family="Liberation Sans" font-size="6.4" fill="#222" stroke="#222" stroke-width="0.15" letter-spacing="-0.12">rinstown</text>
<text x="256.3" y="646.2" font-family="Liberation Sans" font-size="6.4" fill="#222" stroke="#222" stroke-width="0.15" letter-spacing="-0.12">Bluebell</text>
<text x="202.3" y="663.1" font-family="Liberation Sans" font-size="6.4" fill="#222" stroke="#222" stroke-width="0.15" letter-spacing="-0.12">dalkin</text>
<text x="332.6" y="664.3" font-family="Liberation Sans" font-size="6.4" fill="#6a1c1c" stroke="#6a1c1c" stroke-width="0.15" letter-spacing="-0.12">Dublin 12</text>
<text x="472.6" y="562.2" font-family="Liberation Sans" font-size="6.4" fill="#6a1c1c" stroke="#6a1c1c" stroke-width="0.15" letter-spacing="-0.12">Dublin 3</text>
<text x="455.7" y="592.2" font-family="Liberation Sans" font-size="6.4" fill="#222" stroke="#222" stroke-width="0.15" letter-spacing="-0.12">Dublin 1</text>
<text x="451.5" y="646.2" font-family="Liberation Sans" font-size="6.4" fill="#6a1c1c" stroke="#6a1c1c" stroke-width="0.15" letter-spacing="-0.12">Dublin 4</text>
<text x="684.0" y="520.2" font-family="Liberation Sans" font-size="6" fill="#4c8a4c">Hill of Howth</text>
<text x="679.9" y="531.8" font-family="Liberation Sans" font-size="6" fill="#4c8a4c">Ben of Howth</text>
<text x="356.0" y="515.9" font-family="Liberation Sans" font-size="4.8" fill="#a02a2a" letter-spacing="0.5">GLASNEVIN</text>
<text x="511.6" y="518.2" font-family="Liberation Sans" font-size="4.8" fill="#a02a2a" letter-spacing="0.5">RAHENY</text>
<text x="445.2" y="614.6" font-family="Liberation Sans" font-size="4.8" fill="#a02a2a" letter-spacing="0.5">RINGSEND</text>
<text x="374.9" y="658.6" font-family="Liberation Sans" font-size="4.8" fill="#a02a2a" letter-spacing="0.5">RATHMINES</text>
<text x="203" y="381" font-family="Liberation Sans" font-size="6" fill="#333">Hollystown</text>
<text x="394.7" y="407.5" font-family="Liberation Sans" font-size="6" fill="#a09b98" letter-spacing="0.4">Dublin Airport</text>
<text font-family="Liberation Sans" font-size="5.6" fill="#8a8a8a"><tspan x="545" y="543.5">North</tspan><tspan x="547.5" y="549.5">Bull</tspan><tspan x="544.5" y="555.5">Island</tspan></text>
<text x="301" y="585.5" font-family="Liberation Sans" font-size="5.8" fill="#7a7a7a">Phoenix Park</text>
<text font-family="Liberation Sans" font-size="5.6" fill="#7a2a5a"><tspan x="423" y="597.3">River</tspan><tspan x="422" y="603.3">Liffey</tspan></text>
<text x="364.5" y="448.5" transform="rotate(-3.5 364.5 448.5)" font-family="Liberation Sans" font-size="5" fill="#7050b0">Northern Cross Route</text>
<text x="336.5" y="488.0" transform="rotate(56.0 336.5 488.0)" font-family="Liberation Sans" font-size="5" fill="#8b1a3a">Finglas Road</text>
<text x="255.0" y="513.0" transform="rotate(32.0 255.0 513.0)" font-family="Liberation Sans" font-size="5" fill="#5a4a8a">Bóthar Na Huaille</text>
<text x="306.0" y="542.5" transform="rotate(29.0 306.0 542.5)" font-family="Liberation Sans" font-size="5" fill="#8b1a3a">Navan Road</text>
<text x="260.0" y="588.0" transform="rotate(24.0 260.0 588.0)" font-family="Liberation Sans" font-size="5" fill="#8b1a3a">Chapelizod bypass</text>
<text x="218.5" y="580.0" transform="rotate(-74.0 218.5 580.0)" font-family="Liberation Sans" font-size="5" fill="#5a4a8a">Western Parkway</text>
<text x="231.0" y="647.0" transform="rotate(57.0 231.0 647.0)" font-family="Liberation Sans" font-size="5" fill="#5a4a8a">Western Parkway</text>
<path d="M671.5 523.5l1.8-3 1.8 3z M667.5 534.8l1.8-3 1.8 3z" fill="#3f8a4f"/>
<rect x="202" y="672" width="370" height="8" fill="#ffffff" fill-opacity="0.75"/>
<text x="204" y="677.9" font-family="Liberation Sans" font-size="5.45" fill="#555" letter-spacing="0" textLength="366" lengthAdjust="spacingAndGlyphs">Disclaimer: This map must not be used for navigation or precise spatial analysis<tspan fill="#1aa0d0">Data61</tspan> | <tspan fill="#1aa0d0">Leaflet</tspan> | <tspan fill="#1aa0d0">Bing</tspan>, © 2021 Microsoft Corporation, © 2021 TomTom</text>
</svg><!-- left panel -->
<div class="a" style="left:27px;top:380px;width:175px;height:300px;background:#434a55"></div>
<div class="a" style="left:30px;top:415.3px;width:170px;height:19.4px;background:#fff"></div>
<svg class="a" style="left:34px;top:418.5px" width="12" height="12" viewBox="0 0 12 12"><circle cx="4.8" cy="4.8" r="3.6" fill="none" stroke="#9a9a9a" stroke-width="0.9"/><path d="M7.5 7.5L11 11" stroke="#9a9a9a" stroke-width="0.9"/></svg>
<div class="a" style="left:80.3px;top:422.3px;font-size:7.2px;color:#8a8a8a;letter-spacing:0.1px">Search for Locations</div>
<div class="a" style="left:30px;top:438.3px;width:170px;height:19.8px;background:#0aa7d7"></div>
<svg class="a" style="left:34px;top:442px" width="12" height="12" viewBox="0 0 12 12"><circle cx="6" cy="6" r="4.9" fill="none" stroke="#fff" stroke-width="0.9"/><path d="M6 3.3v5.4M3.3 6h5.4" stroke="#fff" stroke-width="0.9"/></svg>
<div class="a" style="left:98.5px;top:444.6px;font-size:7.2px;font-weight:bold;color:#fff;letter-spacing:-0.15px">Add Data</div>
<div class="a" style="left:27px;top:460px;width:175px;height:1px;background:#555d69"></div>
<div class="a" style="left:34.5px;top:466.4px;font-size:6.5px;font-weight:bold;color:#fff;letter-spacing:-0.3px">DATA SETS</div>
<div class="a" style="left:72px;top:466.6px;font-size:6.3px;font-weight:bold;color:#fff;letter-spacing:0.4px">[ 1 ]</div>
<div class="a" style="left:153px;top:467px;font-size:5.9px;font-weight:bold;color:#fff;letter-spacing:-0.25px">Remove All</div>
<svg class="a" style="left:185.5px;top:466.7px" width="6.5" height="6.5" viewBox="0 0 7 7"><circle cx="3.5" cy="3.5" r="2.8" fill="none" stroke="#ccc" stroke-width="0.6"/><path d="M2.3 2.3l2.4 2.4M4.7 2.3L2.3 4.7" stroke="#ccc" stroke-width="0.6"/></svg>
<div class="a" style="left:27px;top:478.5px;width:175px;height:1px;background:#3b414b"></div>
<div class="a" style="left:30.4px;top:483.2px;width:169.2px;height:101px;background:#5e6674;border:1px solid #6d7581"></div>
<div class="a" style="left:30.4px;top:509.2px;width:169.2px;height:1px;background:#6d7581"></div>
<div class="a" style="left:36.2px;top:488.2px;width:7px;height:7px;background:#fff;border:0.6px solid #aab"></div>
<div class="a" style="left:46.7px;top:487.3px;font-size:7.4px;font-weight:bold;color:#fff;line-height:9.5px;letter-spacing:-0.2px">DCC PL Assert List_Open Data_260321 0<br>Web Map Service in GeoServer</div>
<svg class="a" style="left:189.5px;top:489.5px" width="4" height="3" viewBox="0 0 4 3"><path d="M0 0h4L2 2.6z" fill="#fff"/></svg>
<div class="a" style="left:34.8px;top:520.2px;font-size:5.6px;font-weight:bold;color:#fff;letter-spacing:-0.28px">Zoom to Extent</div>
<div class="a" style="left:80.3px;top:515.3px;width:1px;height:12px;background:#7a828e"></div>
<div class="a" style="left:87px;top:520.2px;font-size:5.6px;font-weight:bold;color:#fff;letter-spacing:-0.28px">About This Data</div>
<div class="a" style="left:131px;top:515.3px;width:1px;height:12px;background:#7a828e"></div>
<div class="a" style="left:139.4px;top:520.2px;font-size:5.6px;font-weight:bold;color:#fff;letter-spacing:-0.28px">Split</div>
<div class="a" style="left:158.7px;top:515.3px;width:1px;height:12px;background:#7a828e"></div>
<div class="a" style="left:163px;top:520.2px;font-size:5.6px;font-weight:bold;color:#fff;letter-spacing:-0.28px">Remove</div>
<svg class="a" style="left:184.8px;top:518.8px" width="6" height="6" viewBox="0 0 6 6"><circle cx="3" cy="3" r="2.5" fill="none" stroke="#ccc" stroke-width="0.55"/><path d="M2 2l2 2M4 2L2 4" stroke="#ccc" stroke-width="0.55"/></svg>
<div class="a" style="left:34.8px;top:532.5px;font-size:5.5px;font-weight:bold;color:#fff;line-height:5.9px;letter-spacing:-0.3px">Opacity:<br>(transparency)<br>60 %</div>
<div class="a" style="left:78px;top:535.2px;width:115.7px;height:1px;background:#8a919c"></div>
<div class="a" style="left:78px;top:535px;width:71.7px;height:1.4px;background:#fff"></div>
<div class="a" style="left:146.6px;top:532.5px;width:6.4px;height:6.4px;border-radius:50%;background:#fff"></div>
<div class="a" style="left:34.8px;top:555.6px;width:158.5px;height:1px;background:#747c87"></div>
<div class="a" style="left:35.7px;top:566px;width:10.3px;height:9.8px;background:#fff"></div>
<div class="a" style="left:39.2px;top:569.2px;width:3.4px;height:3.4px;border-radius:50%;background:#e8141a"></div>

<!-- top-right controls -->
<div class="a" style="left:683.4px;top:390.3px;width:17.6px;height:14.5px;background:#434a55;border-radius:1.5px"></div>
<svg class="a" style="left:688px;top:393.5px" width="8.5" height="8" viewBox="0 0 9 8"><path d="M5.5 0.8h2.7v2.7M8.2 0.8L5 4M3.5 7.2H0.8V4.5M0.8 7.2L4 4" fill="none" stroke="#fff" stroke-width="0.75"/></svg>
<div class="a" style="left:706px;top:390.3px;width:30.8px;height:14.5px;background:#434a55;border-radius:1.5px"></div>
<svg class="a" style="left:708.8px;top:393.7px" width="8" height="8" viewBox="0 0 8 8"><ellipse cx="4" cy="4" rx="3.3" ry="3.2" fill="none" stroke="#fff" stroke-width="0.9"/><path d="M0.8 3h6.4M0.8 5h6.4" stroke="#fff" stroke-width="0.8"/><ellipse cx="4" cy="4" rx="1.4" ry="3.2" fill="none" stroke="#fff" stroke-width="0.7"/></svg>
<div class="a" style="left:718.2px;top:393.4px;font-size:7.4px;font-weight:bold;color:#fff;letter-spacing:-0.3px">Map</div>
<div class="a" style="left:742.2px;top:390.3px;width:34.6px;height:14.5px;background:#434a55;border-radius:1.5px"></div>
<svg class="a" style="left:745.3px;top:393.5px" width="7" height="8" viewBox="0 0 7 8"><circle cx="5.5" cy="1.5" r="1" fill="#fff"/><circle cx="1.5" cy="4" r="1" fill="#fff"/><circle cx="5.5" cy="6.5" r="1" fill="#fff"/><path d="M5.5 1.5L1.5 4 5.5 6.5" fill="none" stroke="#fff" stroke-width="0.6"/></svg>
<div class="a" style="left:753.3px;top:393.4px;font-size:7.4px;font-weight:bold;color:#fff;letter-spacing:-0.3px">Share</div>

<!-- feature info -->
<div class="a" style="left:566px;top:410.2px;width:166.8px;height:59.7px;background:rgba(68,75,88,0.93)"></div>
<div class="a" style="left:566px;top:410.2px;width:166.8px;height:19.6px;background:#3f4652"></div>
<div class="a" style="left:570.3px;top:417px;font-size:7.2px;font-weight:bold;color:#fff;letter-spacing:-0.19px">Feature Information</div>
<svg class="a" style="left:720.5px;top:416.8px" width="6" height="6" viewBox="0 0 6 6"><path d="M0.5 0.5l5 5M5.5 0.5l-5 5" stroke="#ccc" stroke-width="0.7"/></svg>
<div class="a" style="left:570.8px;top:435.9px;font-size:7.6px;font-weight:bold;color:#fff;letter-spacing:-0.24px">No data is available here - try another location.</div>
<div class="a" style="left:570.8px;top:456.6px;font-size:7.4px;font-weight:bold;color:#fff;letter-spacing:-0.18px">Lat / Lon</div>
<div class="a" style="left:633px;top:456.6px;font-size:7.4px;font-weight:bold;color:#fff;letter-spacing:-0.05px">52.77619°N, 12.65625°W</div>
<svg class="a" style="left:720.3px;top:456px" width="6.5" height="8" viewBox="0 0 6.5 8"><path d="M3.25 7.5S0.6 4.6 0.6 3.1a2.65 2.65 0 0 1 5.3 0C5.9 4.6 3.25 7.5 3.25 7.5z" fill="none" stroke="#ccc" stroke-width="0.7"/><circle cx="3.25" cy="3.1" r="1" fill="none" stroke="#ccc" stroke-width="0.6"/></svg>

<!-- zoom & right controls -->
<div class="a" style="left:759.8px;top:428px;width:11.2px;height:29.8px;background:#434a55;border-radius:6px"></div>
<svg class="a" style="left:759.8px;top:428px" width="11.2" height="29.8" viewBox="0 0 11.2 29.8"><path d="M5.6 4.2v5M3.1 6.7h5M3.1 24.5h5" stroke="#fff" stroke-width="0.9"/><path d="M7.2 14.5a1.9 1.9 0 1 1-0.6-1.3" fill="none" stroke="#fff" stroke-width="0.7"/><path d="M6.2 12.4l1.2 0.1-0.2 1.3z" fill="#fff"/></svg>
<div class="a" style="left:758px;top:465.4px;width:14.8px;height:14.8px;border-radius:50%;background:#fff;box-shadow:0 0 2px rgba(0,0,0,0.25)"></div>
<svg class="a" style="left:760.4px;top:467.8px" width="10" height="10" viewBox="0 0 10 10"><circle cx="5" cy="5" r="3" fill="none" stroke="#333" stroke-width="0.9"/><circle cx="5" cy="5" r="1.1" fill="#333"/><path d="M5 0.5v1.6M5 7.9v1.6M0.5 5h1.6M7.9 5h1.6" stroke="#333" stroke-width="0.9"/></svg>
<div class="a" style="left:758px;top:488.6px;width:14.8px;height:14.8px;border-radius:50%;background:#fff;box-shadow:0 0 2px rgba(0,0,0,0.25)"></div>
<svg class="a" style="left:761.4px;top:492px" width="8" height="8" viewBox="0 0 8 8"><rect x="0" y="0" width="3.3" height="8" fill="#222"/><rect x="4.7" y="0" width="3.3" height="8" fill="#222"/><path d="M1.8 4h4.4M2.6 3.2L1.8 4l0.8 0.8M5.4 3.2L6.2 4l-0.8 0.8" stroke="#fff" stroke-width="0.5" fill="none"/></svg>
<div class="a" style="left:758px;top:511.3px;width:14.8px;height:14.8px;border-radius:50%;background:#fff;box-shadow:0 0 2px rgba(0,0,0,0.25)"></div>
<svg class="a" style="left:760.3px;top:515px" width="10" height="6" viewBox="0 0 10 6"><circle cx="2" cy="2.2" r="1.5" fill="none" stroke="#222" stroke-width="0.9"/><circle cx="8" cy="2.2" r="1.5" fill="none" stroke="#222" stroke-width="0.9"/><path d="M3.5 2.2h3" stroke="#222" stroke-width="0.9"/><path d="M1.5 5h7" stroke="#666" stroke-width="0.6"/></svg>

<!-- give feedback -->
<div class="a" style="left:709.7px;top:609.6px;width:65px;height:20.2px;border-radius:10px;background:#fff;box-shadow:0 1px 3px rgba(0,0,0,0.3)"></div>
<svg class="a" style="left:714.5px;top:616px" width="9" height="8" viewBox="0 0 9 8"><path d="M0.6 0.6h7.8v5H3.2L1.6 7.3V5.6H0.6z" fill="none" stroke="#555" stroke-width="0.8"/><path d="M2.6 3h0.8M4.2 3h0.8M5.8 3h0.8" stroke="#555" stroke-width="0.8"/></svg>
<div class="a" style="left:727.5px;top:616.4px;font-size:6.9px;color:#666;letter-spacing:-0.15px">Give feedback</div>

<!-- lat lon bar -->
<div class="a" style="left:542px;top:661.3px;width:181.8px;height:9.2px;background:#434a55"></div>
<div class="a" style="left:548px;top:662.8px;font-family:'Liberation Mono',monospace;font-size:5.6px;font-weight:bold;color:#fff;letter-spacing:-0.2px;white-space:pre">Lat  53.39787°N   Lon  6.37859°W    Elev</div>
<div class="a" style="left:726px;top:661px;width:55px;height:9.8px;background:#434a55"></div>
<div class="a" style="left:747.5px;top:663.5px;font-family:'Liberation Mono',monospace;font-size:5.4px;font-weight:bold;color:#fff">2 KM</div>
<div class="a" style="left:732px;top:668px;width:43px;height:1px;background:#fff"></div>


<div id="about"></div>
<div class="a" style="left:30px;top:746.6px;font-size:6.65px;color:#40b4cc">About this dataset</div>
<div class="a" style="left:22px;top:765px;width:769px;height:10px;background:#fff"></div>
</body></html>
